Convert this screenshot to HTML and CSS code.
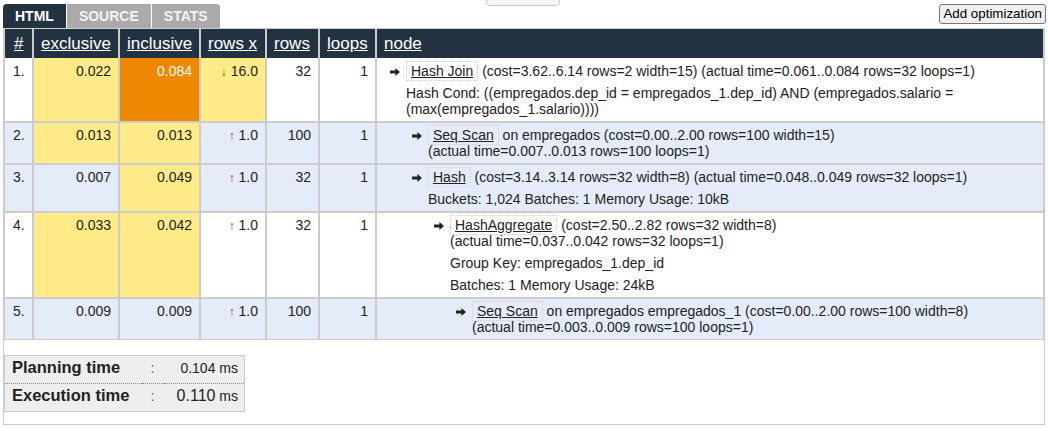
FILE: index.html
```html
<!DOCTYPE html>
<html>
<head>
<meta charset="utf-8">
<link rel="stylesheet" href="styles.css">
</head>
<body>
<div class="page">
  <div class="peek"></div>
  <div class="topbar">
    <div class="tabs">
      <div class="tab active">HTML</div>
      <div class="tab">SOURCE</div>
      <div class="tab">STATS</div>
    </div>
    <button class="addopt">Add optimization</button>
  </div>
  <div class="box">
    <table class="plan">
      <colgroup>
        <col class="c1"><col class="c2"><col class="c3"><col class="c4"><col class="c5"><col class="c6"><col>
      </colgroup>
      <thead>
        <tr>
          <th class="hnum"><a>#</a></th>
          <th><a>exclusive</a></th>
          <th><a>inclusive</a></th>
          <th><a>rows x</a></th>
          <th><a>rows</a></th>
          <th><a>loops</a></th>
          <th><a>node</a></th>
        </tr>
      </thead>
      <tbody>
        <tr>
          <td class="num">1.</td>
          <td class="r y">0.022</td>
          <td class="r o">0.084</td>
          <td class="r y"><span class="dn">↓</span> 16.0</td>
          <td class="r">32</td>
          <td class="r">1</td>
          <td class="node">
            <div class="n l0">
              <div class="head"><svg class="arr" viewBox="0 0 10 8" width="10" height="8"><path d="M0 2.6h5.4V0L10 4 5.4 8V5.4H0z"/></svg><span class="op">Hash Join</span> (cost=3.62..6.14 rows=2 width=15) <span class="act">(actual time=0.061..0.084 rows=32 loops=1)</span></div>
              <div class="det">Hash Cond: ((empregados.dep_id = empregados_1.dep_id) AND (empregados.salario = (max(empregados_1.salario))))</div>
            </div>
          </td>
        </tr>
        <tr class="alt">
          <td class="num">2.</td>
          <td class="r y">0.013</td>
          <td class="r y">0.013</td>
          <td class="r"><span class="up">↑</span> 1.0</td>
          <td class="r">100</td>
          <td class="r">1</td>
          <td class="node">
            <div class="n l1">
              <div class="head"><svg class="arr" viewBox="0 0 10 8" width="10" height="8"><path d="M0 2.6h5.4V0L10 4 5.4 8V5.4H0z"/></svg><span class="op">Seq Scan</span> on empregados (cost=0.00..2.00 rows=100 width=15) <span class="act">(actual time=0.007..0.013 rows=100 loops=1)</span></div>
            </div>
          </td>
        </tr>
        <tr class="alt">
          <td class="num">3.</td>
          <td class="r">0.007</td>
          <td class="r y">0.049</td>
          <td class="r"><span class="up">↑</span> 1.0</td>
          <td class="r">32</td>
          <td class="r">1</td>
          <td class="node">
            <div class="n l1">
              <div class="head"><svg class="arr" viewBox="0 0 10 8" width="10" height="8"><path d="M0 2.6h5.4V0L10 4 5.4 8V5.4H0z"/></svg><span class="op">Hash</span> (cost=3.14..3.14 rows=32 width=8) <span class="act">(actual time=0.048..0.049 rows=32 loops=1)</span></div>
              <div class="det">Buckets: 1,024 Batches: 1 Memory Usage: 10kB</div>
            </div>
          </td>
        </tr>
        <tr>
          <td class="num">4.</td>
          <td class="r y">0.033</td>
          <td class="r y">0.042</td>
          <td class="r"><span class="up">↑</span> 1.0</td>
          <td class="r">32</td>
          <td class="r">1</td>
          <td class="node">
            <div class="n l2">
              <div class="head"><svg class="arr" viewBox="0 0 10 8" width="10" height="8"><path d="M0 2.6h5.4V0L10 4 5.4 8V5.4H0z"/></svg><span class="op">HashAggregate</span> (cost=2.50..2.82 rows=32 width=8) <span class="act">(actual time=0.037..0.042 rows=32 loops=1)</span></div>
              <div class="det">Group Key: empregados_1.dep_id</div>
              <div class="det">Batches: 1 Memory Usage: 24kB</div>
            </div>
          </td>
        </tr>
        <tr class="alt">
          <td class="num">5.</td>
          <td class="r">0.009</td>
          <td class="r">0.009</td>
          <td class="r"><span class="up">↑</span> 1.0</td>
          <td class="r">100</td>
          <td class="r">1</td>
          <td class="node">
            <div class="n l3">
              <div class="head"><svg class="arr" viewBox="0 0 10 8" width="10" height="8"><path d="M0 2.6h5.4V0L10 4 5.4 8V5.4H0z"/></svg><span class="op">Seq Scan</span> on empregados empregados_1 (cost=0.00..2.00 rows=100 width=8) <span class="act">(actual time=0.003..0.009 rows=100 loops=1)</span></div>
            </div>
          </td>
        </tr>
      </tbody>
    </table>
    <table class="stats">
      <colgroup><col class="k1"><col class="k2"><col></colgroup>
      <tr class="first">
        <td class="k">Planning time</td>
        <td class="c">:</td>
        <td class="v"><span class="pv">0.104</span> <span class="ms">ms</span></td>
      </tr>
      <tr>
        <td class="k">Execution time</td>
        <td class="c">:</td>
        <td class="v"><span class="ev">0.110</span> <span class="ms">ms</span></td>
      </tr>
    </table>
  </div>
</div>
</body>
</html>
```

FILE: styles.css
```css
html, body {
  margin: 0;
  background: #fff;
}
body {
  font-family: "Liberation Sans", Arial, sans-serif;
  font-size: 14px;
  color: #222;
}
.page {
  position: relative;
  margin: 0 3px;
  padding-top: 4px;
}
.peek {
  position: absolute;
  left: 483px;
  top: -20px;
  width: 74px;
  height: 26px;
  box-sizing: border-box;
  border: 1px solid #c4c4c4;
  border-radius: 4px;
  background: #f7f7f7;
}
.topbar {
  display: flex;
  align-items: flex-start;
}
.tabs {
  display: flex;
  gap: 1px;
}
.tab {
  font-weight: bold;
  font-size: 14px;
  line-height: 16px;
  padding: 4px 12px;
  color: #f4f4f4;
  background: #aaaaaa;
}
.tab.active {
  background: #233240;
  color: #fff;
}
.tab:first-child { border-top-left-radius: 4px; }
.tab:last-child { border-top-right-radius: 4px; }
.addopt {
  margin-left: auto;
  margin-right: -1px;
  font-family: "Liberation Sans", Arial, sans-serif;
  font-size: 13.33px;
  line-height: 16px;
  padding: 1px 3px;
  color: #000;
  background: #efefef;
  border: 1px solid #767676;
  border-radius: 3px;
}
.box {
  border: 1px solid #cccccc;
}
table.plan {
  width: 100%;
  border-collapse: separate;
  border-spacing: 0;
  table-layout: fixed;
}
col.c1 { width: 29px; }
col.c2 { width: 86px; }
col.c3 { width: 81px; }
col.c4 { width: 66px; }
col.c5 { width: 53px; }
col.c6 { width: 57px; }
.plan th {
  background: #233240;
  color: #fff;
  font-weight: normal;
  font-size: 17px;
  line-height: 20px;
  padding: 5px 4px 4px 7px;
  text-align: left;
  border-left: 1px solid #cccccc;
  border-right: 1px solid #cccccc;
}
.plan th.hnum { padding-left: 9px; }
.plan th a {
  color: #fff;
  text-decoration: underline;
}
.plan td {
  border: 1px solid #cccccc;
  padding: 4px 7px 4px 8px;
  vertical-align: top;
  line-height: 16px;
  background: #fff;
}
.plan tbody tr:first-child td { border-top: 0; padding-top: 5px; }
.plan tr.alt td { background: #e5ecf9; }
.plan td.r { text-align: right; }
.plan td.y, .plan tr.alt td.y { background: #ffeb88; }
.plan td.o { background: #ee8800; color: #fff; }
.dn, .up {
  font-size: 12px;
  color: #b8302a;
}
.up { color: #9a1f1f; }
.plan td.node {
  padding-left: 13px;
  padding-right: 8px;
}
.n.l0 { padding-left: 16px; }
.n.l1 { padding-left: 38px; }
.n.l2 { padding-left: 60px; }
.n.l3 { padding-left: 82px; }
.head {
  text-indent: -16px;
}
.arr {
  display: inline-block;
  margin-right: 6px;
  vertical-align: 0;
  fill: #222;
}
.op {
  text-decoration: underline;
  border: 1px dotted #cfcfcf;
  padding: 1px 4px;
}
.act {
  white-space: nowrap;
}
.det {
  margin-top: 6px;
}
table.stats {
  margin: 15px 0 12px 0;
  width: 241px;
  border-collapse: collapse;
  table-layout: fixed;
  background: #eeeeee;
  border: 1px solid #cccccc;
}
col.k1 { width: 137px; }
col.k2 { width: 22px; }
.stats td {
  padding: 2px 0 5px 0;
  line-height: 19px;
  vertical-align: baseline;
}
.stats tr.first td {
  border-bottom: 1px dotted #888;
}
.stats td.k {
  font-weight: bold;
  font-size: 16.5px;
  padding-left: 7px;
  white-space: nowrap;
}
.stats td.c {
  text-align: center;
  color: #555;
  font-size: 14px;
}
.stats td.v {
  text-align: right;
  padding-right: 6px;
  white-space: nowrap;
}
.pv { font-size: 14px; }
.ev { font-size: 16px; }
.ms { font-size: 14px; }
```
